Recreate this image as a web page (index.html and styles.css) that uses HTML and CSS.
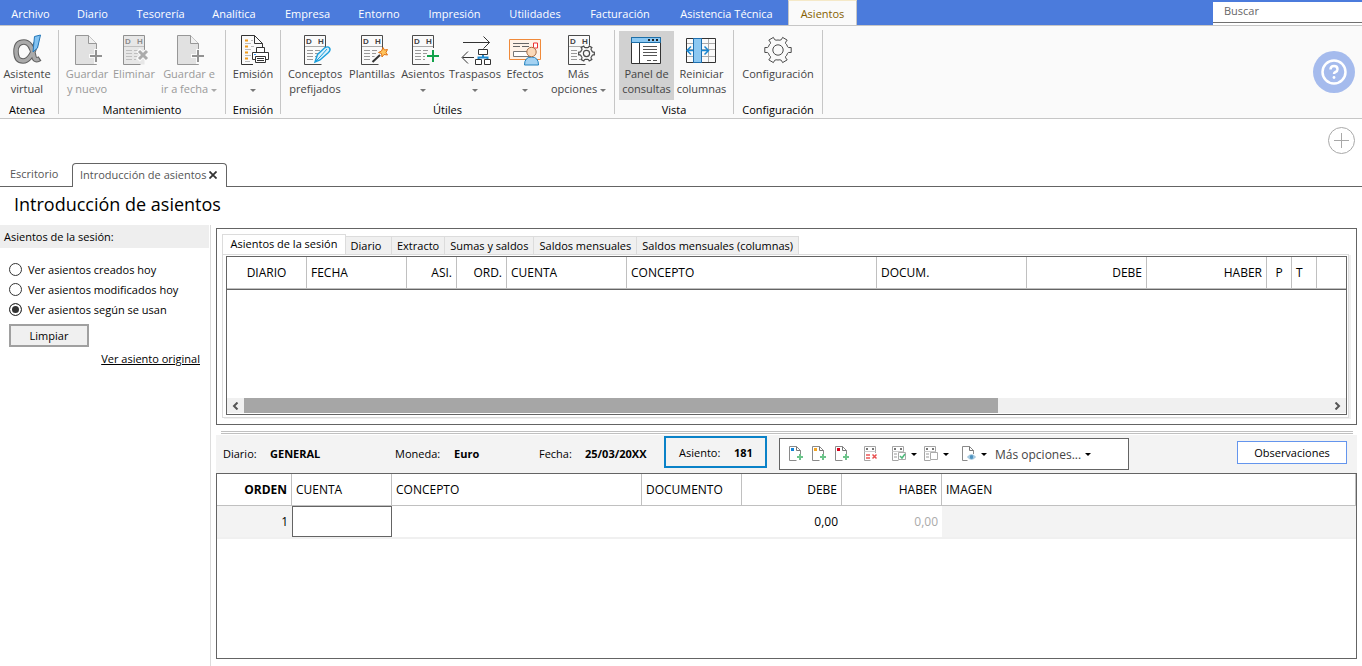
FILE: index.html
```html
<!DOCTYPE html>
<html lang="es">
<head>
<meta charset="utf-8">
<title>Introducción de asientos</title>
<link rel="stylesheet" href="styles.css">
</head>
<body>
<svg class="defs" aria-hidden="true">
  <defs>
    <symbol id="dh" viewBox="0 0 32 32">
      <path d="M26.500 16V1.500h-21v29h17" fill="none" stroke="currentColor"/>
      <text x="7" y="10" class="dh-text">D</text><text x="19" y="10" class="dh-text">H</text>
      <path d="M5.500 12.500h21" stroke="currentColor" opacity=".45"/>
      <path d="M8 16.500h6M8 19.500h6M8 22.500h6M8 25.500h6M16 16.500h5M16 19.500h4M16 22.500h3M16 25.500h2" stroke="#999"/>
    </symbol>
    <symbol id="newdoc" viewBox="0 0 32 32">
      <path d="M4.500 1.500h13l8 8v21h-21z" fill="#e1e1e1" stroke="#979797"/>
      <path d="M17.500 1.500v8h8" fill="#f1f1f1" stroke="#979797"/>
      <path d="M25 15v15M18 22h14" stroke="#fafafa" stroke-width="4"/>
      <path d="M25 16v12M19 22h12" stroke="#929292" stroke-width="2"/>
    </symbol>
    <symbol id="gear" viewBox="-16 -16 32 32">
      <path d="M9.500-3.300Q10-2 13.200-2.500V2.500Q10 2 9.500 3.300Q9 5.500 7.500 6.600Q7 7.500 9.200 9.900L4.600 12.600Q3.500 9.500 1.900 9.800Q0 10.200-1.900 9.800Q-3.500 9.500-4.600 12.600L-9.200 9.900Q-7 7.500-7.500 6.600Q-9 5.500-9.500 3.300Q-10 2-13.200 2.500V-2.500Q-10-2-9.500-3.300Q-9-5.500-7.500-6.600Q-7-7.500-9.200-9.900L-4.600-12.600Q-3.500-9.500-1.900-9.800Q0-10.200 1.900-9.800Q3.500-9.500 4.600-12.600L9.200-9.900Q7-7.500 7.500-6.600Q9-5.500 9.500-3.300Z" stroke="#4b4b4b" stroke-linejoin="round"/>
      <circle r="5.200" stroke="#4b4b4b"/>
    </symbol>
    <symbol id="minidoc" viewBox="0 0 16 16">
      <path d="M12.500 9V4.500L8.500 .500h-7v14h7" fill="#fff" stroke="#8a8a8a"/>
      <path d="M8.500 .500v4h4" fill="none" stroke="#777"/>
      <rect x="3" y="2" width="3" height="3" fill="currentColor"/>
      <path d="M12 8v6M9 11h6" stroke="#6cc48a" stroke-width="2"/>
    </symbol>
    <symbol id="minidh" viewBox="0 0 16 16">
      <path d="M12.500 7V.500h-11v14h6" fill="#fff" stroke="#a5a5a5"/>
      <path d="M3 3h2M9 3h2" stroke="#777" stroke-width="2"/>
      <path d="M1.500 5.500h11" stroke="#ccc"/>
    </symbol>
  </defs>
</svg>

<nav class="menubar">
  <a href="#">Archivo</a><a href="#">Diario</a><a href="#">Tesorería</a><a href="#">Analítica</a><a href="#">Empresa</a><a href="#">Entorno</a><a href="#">Impresión</a><a href="#">Utilidades</a><a href="#">Facturación</a><a href="#">Asistencia Técnica</a><a href="#" class="current">Asientos</a>
  <input class="search" type="search" placeholder="Buscar" aria-label="Buscar">
</nav>

<header class="ribbon">
  <section class="group">
    <div class="tools tools-atenea">
      <button class="tool"><svg viewBox="0 0 32 32" fill="none"><path d="M25 9Q20 27 12 27Q5 27 5 17.500T13 8Q20 8 22.500 21Q23.500 28 29 24.500" stroke="#606060" stroke-width="5.500"/><path d="M25 9Q20 27 12 27Q5 27 5 17.500T13 8Q20 8 22.500 21Q23.500 27.500 28 25" stroke="#aaa" stroke-width="3.500"/><path d="M23.500 2.500l6-1.500-3 13-4.500 4z" fill="#83c3f2" stroke="#2477b8"/></svg><span>Asistente<br>virtual</span></button>
    </div>
    <h2>Atenea</h2>
  </section>
  <section class="group">
    <div class="tools tools-save">
      <button class="tool" disabled><svg><use href="#newdoc"/></svg><span>Guardar<br>y nuevo</span></button>
      <button class="tool" disabled><svg class="faded" viewBox="0 0 32 32"><path d="M5.500 1.500h21v29h-21z" fill="#dcdcdc"/><use href="#dh"/><path d="M20 16l10 10M30 16L20 26" stroke="#fafafa" stroke-width="5"/><path d="M21 17l8 8M29 17l-8 8" stroke="#777" stroke-width="3"/></svg><span>Eliminar</span></button>
      <button class="tool" disabled><svg><use href="#newdoc"/></svg><span>Guardar e<br>ir a fecha <i class="caret"></i></span></button>
    </div>
    <h2>Mantenimiento</h2>
  </section>
  <section class="group">
    <div class="tools tools-emit">
      <button class="tool"><svg viewBox="0 0 32 32"><path d="M16 30.500H4.500v-29h13l8 8V13M17.500 1.500v8h8" fill="none" stroke="#333"/><path d="M8 6.500h3M8 12.500h3M8 18.500h3M8 24.500h3" stroke="#f09a1a" stroke-width="2"/><path d="M8 9.500h6M8 15.500h6M8 21.500h6M8 27.500h5M14 6.500h2M14 12.500h3" stroke="#bbb"/><path d="M19.500 18v-4.500h8V18M19 25.500h-3.500v-7h16v7H28M18.500 22.500h10v6h-10zM20 24.500h7M20 26.500h7" fill="#fff" stroke="#333"/><path d="M17 20.500h2" stroke="#39f"/></svg><span>Emisión<br><i class="caret"></i></span></button>
    </div>
    <h2>Emisión</h2>
  </section>
  <section class="group">
    <div class="tools tools-utils">
      <button class="tool"><svg viewBox="0 0 32 32"><use href="#dh"/><path d="M16 28l2.500-7.500L26 13.500q3-1.500 4.500.500t-1 4.500L21 26z" fill="#d9f0fb" stroke="#1a9fdc" stroke-width="1.400"/><path d="M16 28l5-5L28 15" fill="none" stroke="#1a9fdc"/></svg><span>Conceptos<br>prefijados</span></button>
      <button class="tool"><svg viewBox="0 0 32 32"><use href="#dh"/><path d="M16 28L25 20" stroke="#fafafa" stroke-width="5"/><path d="M16.500 28L24 21" stroke="#333" stroke-width="2"/><path d="M27 13.500l1.500 2.500 3-.500-1.500 3 1.500 2.500-3.500-.500-2 2.500-.500-3.500-3-1 3-1.500z" fill="#ffc45c" stroke="#e07316"/></svg><span>Plantillas</span></button>
      <button class="tool"><svg viewBox="0 0 32 32"><use href="#dh"/><path d="M26 14v15M18 22h14" stroke="#fafafa" stroke-width="4"/><path d="M26 16v12M20 22h12" stroke="#12a24a" stroke-width="2"/></svg><span>Asientos<br><i class="caret"></i></span></button>
      <button class="tool"><svg viewBox="0 0 32 32"><path d="M4 8.500h26.500M24.500 2.500l6 6-6 6M15 23.500H3.500M9 17.500l-6 6 6 6" fill="none" stroke="#333"/><path d="M24 21v2.500M19.500 26v-2.500h9V26" fill="none" stroke="#1e8bd2" stroke-width="2"/><path d="M19.500 15.500h9v5h-9zM16.500 25.500h6v5h-6zM25.500 25.500h6v5h-6z" fill="#fff" stroke="#333"/></svg><span>Traspasos<br><i class="caret"></i></span></button>
      <button class="tool"><svg viewBox="0 0 32 32"><path d="M.500 5.500h31v20H.500z" fill="#fff3e8" stroke="#f08a3a"/><path d="M4 9.500h16M4 12.500h7M13 12.500h7" stroke="#666"/><path d="M4.500 17.500h17v5h-17z" fill="#fff" stroke="#777"/><path d="M24.500 9h4v5h-4z" fill="#fff" stroke="#e33"/><path d="M15.500 31q0-8 7-8t7 8z" fill="#a4d2f2" stroke="#2382bf"/><circle cx="22.500" cy="18" r="4.700" fill="#fbd9b8" stroke="#a96d44"/></svg><span>Efectos<br><i class="caret"></i></span></button>
      <button class="tool"><svg viewBox="0 0 32 32"><use href="#dh"/><circle cx="24" cy="20" r="9" fill="#fafafa"/><use class="small-gear" href="#gear" x="14" y="10" width="19" height="19"/></svg><span>Más<br>opciones <i class="caret"></i></span></button>
    </div>
    <h2>Útiles</h2>
  </section>
  <section class="group">
    <div class="tools tools-view">
      <button class="tool pressed"><svg viewBox="0 0 32 32"><path d="M.500 3.500h29v26H.500z" fill="#fff" stroke="#333"/><path d="M.500 3.500h29v5H.500z" fill="#8cc8f2" stroke="#1d6fa8"/><path d="M17 6h2M21 6h2M25 6h2" stroke="#222" stroke-width="2"/><path d="M8.500 9v20" stroke="#333"/><path d="M12 12.500h14M12 15.500h14M12 18.500h14M12 21.500h14M16 26.500h4M22 26.500h4" stroke="#555"/></svg><span>Panel de<br>consultas</span></button>
      <button class="tool"><svg viewBox="0 0 32 32"><path d="M0 9.500h29M0 15.500h29M0 22.500h29M22.500 4v25" stroke="#aaa"/><path d="M.500 4.500h29v24H.500z" fill="none" stroke="#333"/><path d="M7.500 4.500h8v24h-8z" fill="#8cc8f2" stroke="#1d6fb0"/><path d="M7 16.500H1.500M5 12.500l-4 4 4 4M15 16.500h7M18.500 12.500l4 4-4 4" fill="none" stroke="#1a86d0" stroke-width="1.500"/></svg><span>Reiniciar<br>columnas</span></button>
    </div>
    <h2>Vista</h2>
  </section>
  <section class="group">
    <div class="tools tools-config">
      <button class="tool"><svg class="outline"><use href="#gear"/></svg><span>Configuración</span></button>
    </div>
    <h2>Configuración</h2>
  </section>
  <button class="help" aria-label="Ayuda"><svg viewBox="0 0 42 42"><circle cx="21" cy="21" r="11.500" fill="none" stroke="#fff" stroke-width="2.500"/><path d="M17.500 18.500q0-3.500 3.500-3.500t3.500 3.200q0 2-2 2.800-1.500.600-1.500 2" fill="none" stroke="#fff" stroke-width="2.500"/><circle cx="21" cy="26.500" r="1.400" fill="#fff"/></svg></button>
</header>

<div class="strip"><button class="add" aria-label="Añadir"><svg viewBox="0 0 27 27"><circle cx="13.500" cy="13.500" r="13"/><path d="M13.500 6v15M6 13.500h15"/></svg></button></div>

<div class="doctabs">
  <a href="#" class="doctab">Escritorio</a>
  <div class="doctab open"><a href="#">Introducción de asientos</a><button aria-label="Cerrar"><svg viewBox="0 0 9 9"><path d="M.500 .500l8 8M8.500 .500l-8 8"/></svg></button></div>
  <div class="doctabs-rest"></div>
</div>

<h1>Introducción de asientos</h1>

<div class="workspace">
  <aside>
    <h3>Asientos de la sesión:</h3>
    <form class="filters">
      <label><input type="radio" name="ver">Ver asientos creados hoy</label>
      <label><input type="radio" name="ver">Ver asientos modificados hoy</label>
      <label><input type="radio" name="ver" checked>Ver asientos según se usan</label>
      <button type="button">Limpiar</button>
      <a href="#">Ver asiento original</a>
    </form>
  </aside>

  <main>
    <section class="session">
      <div class="tabs">
        <button class="active">Asientos de la sesión</button><button>Diario</button><button>Extracto</button><button>Sumas y saldos</button><button>Saldos mensuales</button><button>Saldos mensuales (columnas)</button>
      </div>
      <div class="page">
        <div class="grid">
          <table class="head">
            <colgroup><col class="w80"><col class="w100"><col class="w50"><col class="w50"><col class="w120"><col class="w250"><col class="w150"><col class="w120"><col class="w120"><col class="w25"><col class="w25"><col></colgroup>
            <thead><tr><th class="mid">DIARIO</th><th>FECHA</th><th class="num">ASI.</th><th class="num">ORD.</th><th>CUENTA</th><th>CONCEPTO</th><th>DOCUM.</th><th class="num">DEBE</th><th class="num">HABER</th><th class="mid">P</th><th>T</th><th></th></tr></thead>
          </table>
          <div class="rows"></div>
          <div class="scroll">
            <button aria-label="Izquierda"><svg viewBox="0 0 7 8"><path d="M5.500 .500L2 4l3.500 3.500"/></svg></button>
            <div class="track"><div class="thumb"></div></div>
            <button aria-label="Derecha"><svg viewBox="0 0 7 8"><path d="M1.500 .500L5 4 1.500 7.500"/></svg></button>
          </div>
        </div>
      </div>
    </section>

    <div class="splitter"></div>

    <section class="entry-bar">
      <dl class="facts"><dt>Diario:</dt><dd>GENERAL</dd><dt>Moneda:</dt><dd>Euro</dd><dt>Fecha:</dt><dd>25/03/20XX</dd></dl>
      <dl class="entry-no"><dt>Asiento:</dt><dd>181</dd></dl>
      <div class="actions">
        <button aria-label="Nuevo" class="blue"><svg><use href="#minidoc"/></svg></button>
        <button aria-label="Insertar" class="amber"><svg><use href="#minidoc"/></svg></button>
        <button aria-label="Duplicar" class="red"><svg><use href="#minidoc"/></svg></button>
        <button aria-label="Eliminar" class="delete"><svg viewBox="0 0 16 16"><use href="#minidh"/><path d="M3 9h4M3 12h4" stroke="#f08080" stroke-width="2"/><path d="M9.500 8.500l4 4M13.500 8.500l-4 4" stroke="#e85050" stroke-width="1.500"/></svg></button>
        <button aria-label="Validar" class="drop"><svg viewBox="0 0 16 16"><use href="#minidh"/><path d="M3 8h3M3 11h3" stroke="#ccc" stroke-width="2"/><path d="M7.500 6.500h7v7h-7z" fill="#fff" stroke="#aaa"/><path d="M9 10l2 2 3-4" fill="none" stroke="#4db87a" stroke-width="1.500"/></svg><i class="caret"></i></button>
        <button aria-label="Marcar" class="drop"><svg viewBox="0 0 16 16"><use href="#minidh"/><path d="M3 8h3M3 11h3" stroke="#ccc" stroke-width="2"/><path d="M7.500 6.500h7v7h-7z" fill="#fff" stroke="#aaa"/></svg><i class="caret"></i></button>
        <button aria-label="Ver imagen" class="view"><svg viewBox="0 0 16 16"><path d="M12.500 8V4.500L8.500 .500h-7v14h5" fill="#fff" stroke="#8a8a8a"/><path d="M8.500 .500v4h4" fill="none" stroke="#777"/><path d="M6.500 11q4-4.500 8 0-4 4.500-8 0z" fill="#cfe6f5" stroke="#8eb9d5"/><circle cx="10.500" cy="11" r="2" fill="#4f93c0"/></svg><i class="caret"></i></button>
        <button class="more">Más opciones... <i class="caret"></i></button>
      </div>
      <button class="notes">Observaciones</button>
    </section>

    <section class="lines">
      <table>
        <colgroup><col class="w75"><col class="w100"><col class="w250"><col class="w100"><col class="w100"><col class="w100"><col></colgroup>
        <thead><tr><th class="num bold">ORDEN</th><th>CUENTA</th><th>CONCEPTO</th><th>DOCUMENTO</th><th class="num">DEBE</th><th class="num">HABER</th><th>IMAGEN</th></tr></thead>
        <tbody><tr><td class="num gray">1</td><td class="field"><input type="text" aria-label="Cuenta"></td><td></td><td></td><td class="num">0,00</td><td class="num dim">0,00</td><td class="gray"></td></tr></tbody>
      </table>
    </section>
  </main>
</div>
</body>
</html>
```
FILE: styles.css
```css
* { box-sizing: border-box; }

body {
  margin: 0;
  min-height: 100vh;
  display: flex;
  flex-direction: column;
  background: #fff;
  color: #000;
  font: 11px/15px "Open Sans", "Noto Sans", sans-serif;
}

button, input { font: inherit; color: inherit; }
button { margin: 0; padding: 0; border: 0; background: none; }
a { color: inherit; text-decoration: none; }
h1, h2, h3, dl, dd { margin: 0; font-weight: 400; }
svg { display: block; }
.defs { position: absolute; width: 0; height: 0; }

.caret {
  display: inline-block;
  border: 3px solid transparent;
  border-top-color: currentColor;
  border-bottom: 0;
  vertical-align: middle;
}

/* Menu */
.menubar {
  display: grid;
  grid-template-columns: 61px 63px 73px 74px 73px 70px 81px 80px 90px 123px 69px 1fr;
  height: 26px;
  background: #4b7bdc;
  border-bottom: 1px solid #c6c6c6;
  color: #fff;
  text-align: center;
  line-height: 28px;
}
.menubar .current {
  height: 25px;
  background: #fafafa;
  border: 1px solid #c6c6c6;
  border-top-color: #f5e9c8;
  border-bottom: 0;
  color: #866000;
  line-height: 26px;
}
.search {
  justify-self: end;
  width: 149px;
  height: 21px;
  margin-top: 2px;
  padding: 0 11px 2px;
  border: 0;
  border-bottom: 1px solid #707070;
  border-radius: 0;
  background: #fff;
  box-shadow: 0 2px #fff;
  outline: 0;
}
.search::placeholder { color: #666; }

/* Ribbon */
.ribbon {
  display: flex;
  height: 93px;
  padding: 4px 0;
  background: #fafafa;
  border-bottom: 1px solid #c6c6c6;
}
.group {
  display: flex;
  flex-direction: column;
  justify-content: space-between;
  height: 84px;
  padding: 0 4px;
  border-right: 1px solid #c6c6c6;
}
.group h2 { margin-bottom: -3px; font-size: 11px; line-height: 15px; text-align: center; }
.tools { display: grid; }
.tools-atenea { grid-template-columns: 50px; }
.group:first-child { padding: 0 6px 0 2px; }
.tools-save { grid-template-columns: 48px 46px 64px; }
.tools-emit { grid-template-columns: 46px; }
.tools-utils { grid-template-columns: 60px 54px 48px 56px 44px 63px; }
.tools-view { grid-template-columns: 55px 55px; }
.tools-config { grid-template-columns: 80px; }
.tool {
  display: flex;
  flex-direction: column;
  align-items: center;
  height: 69px;
  margin-top: 1px;
  padding-top: 3px;
  color: #444;
  white-space: nowrap;
}
.tool:disabled { color: #999; }
.tool svg { width: 32px; height: 32px; overflow: visible; color: #4b4b4b; }
.tool svg.faded { opacity: .6; }
.tool .caret { color: #777; }
.tool:disabled .caret { color: #aaa; }
.pressed { background: #d1d1d1; }
.outline, .small-gear { fill: none; }
.small-gear { stroke-width: 2; }
.dh-text { font: 700 8px "Liberation Sans", sans-serif; fill: #444; }
.help {
  align-self: center;
  width: 42px;
  height: 42px;
  margin: 0 7px 0 auto;
  border-radius: 50%;
  background: #a5bbed;
}

/* Document tabs */
.strip { display: flex; justify-content: flex-end; height: 44px; padding: 8px 7px 0; }
.add, .add svg { width: 27px; height: 27px; }
.add svg { fill: none; stroke: #a8a8a8; }
.doctabs { display: flex; height: 24px; color: #555; line-height: 22px; }
.doctab { width: 72px; padding-left: 10px; border-bottom: 1px solid #646464; }
.doctab.open {
  display: flex;
  align-items: center;
  gap: 3px;
  width: 155px;
  padding: 0 0 2px 7px;
  border: 1px solid #646464;
  border-bottom: 0;
  border-radius: 4px 4px 0 0;
}
.doctab svg { width: 8px; height: 8px; stroke: #333; stroke-width: 2; }
.doctabs-rest { flex: 1; border-bottom: 1px solid #646464; }
h1 { padding: 3px 14px 7px; font-size: 18px; line-height: 28px; }

/* Workspace */
.workspace { flex: 1; display: flex; }
aside { width: 211px; padding-right: 1px; border-right: 1px solid #dcdcdc; }
aside h3 { padding: 4px; background: #eee; font-size: 11px; }
.filters { display: flex; flex-direction: column; align-items: flex-start; padding: 11px 9px; }
.filters label { display: flex; align-items: center; gap: 6px; height: 20px; }
.filters input {
  appearance: none;
  width: 13px;
  height: 13px;
  margin: 0;
  border: 1px solid #333;
  border-radius: 50%;
  background: #fff;
}
.filters input:checked { background: #333; box-shadow: inset 0 0 0 2px #fff; }
.filters button {
  width: 80px;
  height: 23px;
  margin: 5px 0 4px;
  border: 2px solid #a0a0a0;
  background: #f0f0f0;
}
.filters a { align-self: flex-end; text-decoration: underline; }

main { flex: 1; display: flex; flex-direction: column; min-width: 0; padding: 3px 5px 7px; }

.session { padding: 5px 7px 6px 5px; border: 1px solid #646464; }
.tabs { display: flex; align-items: flex-end; height: 20px; }
.tabs button {
  height: 18px;
  padding: 0 5px;
  border: 1px solid #dcdcdc;
  border-width: 1px 1px 0 0;
  background: #f0f0f0;
  white-space: nowrap;
}
.tabs button:nth-child(2) { width: 46px; padding: 0 9px 0 4px; }
.tabs .active { height: 20px; width: 124px; padding-bottom: 2px; border-left-width: 1px; background: #fff; }
.page { padding: 1px 1px 2px 3px; border: 1px solid #dcdcdc; box-shadow: 2px 1px #f0f0f0; }
.grid { border: 1px solid #646464; }

table { width: 100%; border-collapse: separate; border-spacing: 0; table-layout: fixed; font-size: 12px; }
th, td { padding: 0 4px; text-align: left; font-weight: 400; white-space: nowrap; }
th { height: 32px; border-right: 1px solid #c0c0c0; border-bottom: 1px solid #c0c0c0; }
.head th:last-child { border-right: 0; }
.num { text-align: right; }
.mid { text-align: center; padding: 0; }
.bold { font-weight: 700; }
.w25 { width: 25px; } .w50 { width: 50px; } .w75 { width: 75px; } .w80 { width: 80px; }
.w100 { width: 100px; } .w120 { width: 120px; } .w150 { width: 150px; } .w250 { width: 250px; }

.rows { height: 109px; border-top: 1px solid #646464; }
.scroll { display: flex; height: 16px; background: #f0f0f0; border-bottom: 1px solid #fff; }
.scroll button { display: grid; place-items: center; width: 17px; }
.scroll svg { width: 7px; height: 8px; fill: none; stroke: #555; stroke-width: 2; }
.track { flex: 1; }
.thumb { width: 69.5%; height: 100%; background: #a6a6a6; }

.splitter { height: 3px; margin: 6px 4px 1px 5px; border: 1px solid #c0c0c0; border-width: 1px 0; }

.entry-bar { display: flex; height: 38px; padding: 1px 10px 0 7px; background: #f3f3f3; }
.facts, .entry-no { display: grid; align-items: center; }
.facts { grid-template-columns: 47px 125px 59px 85px 46px 79px; height: 34px; }
dd { font-weight: 700; }
.entry-no {
  grid-template-columns: 55px auto;
  width: 103px;
  height: 32px;
  padding-left: 13px;
  border: 2px solid #0a82c8;
}
.actions {
  display: flex;
  align-items: center;
  width: 350px;
  height: 32px;
  margin: 2px 0 0 12px;
  padding-left: 8px;
  border: 1px solid #646464;
  background: #fff;
}
.actions svg { width: 16px; height: 16px; }
.actions button { display: flex; align-items: center; width: 23px; }
.actions .blue { color: #1383d6; }
.actions .amber { color: #f5a623; }
.actions .red { color: #d9001b; }
.actions .delete { width: 28px; margin-left: 6px; }
.actions .drop { width: 32px; gap: 4px; }
.actions .view { width: 34px; gap: 4px; margin-left: 6px; }
.actions .more { gap: 4px; width: auto; color: #444; font-size: 12px; }
.actions .caret { color: #000; }
.notes {
  width: 110px;
  height: 23px;
  margin: 5px 0 0 auto;
  border: 1px solid #6495ed;
  background: #fff;
}

.lines { flex: 1; border: 1px solid #646464; }
.lines td { height: 33px; border-bottom: 2px solid #f0f0f0; }
.lines .gray { background: #f3f3f3; }
.lines .dim { color: #aaa; }
.lines .field { padding: 0; }
.field input { display: block; width: 100%; height: 31px; border: 1px solid #646464; border-radius: 0; outline: 0; }
```
